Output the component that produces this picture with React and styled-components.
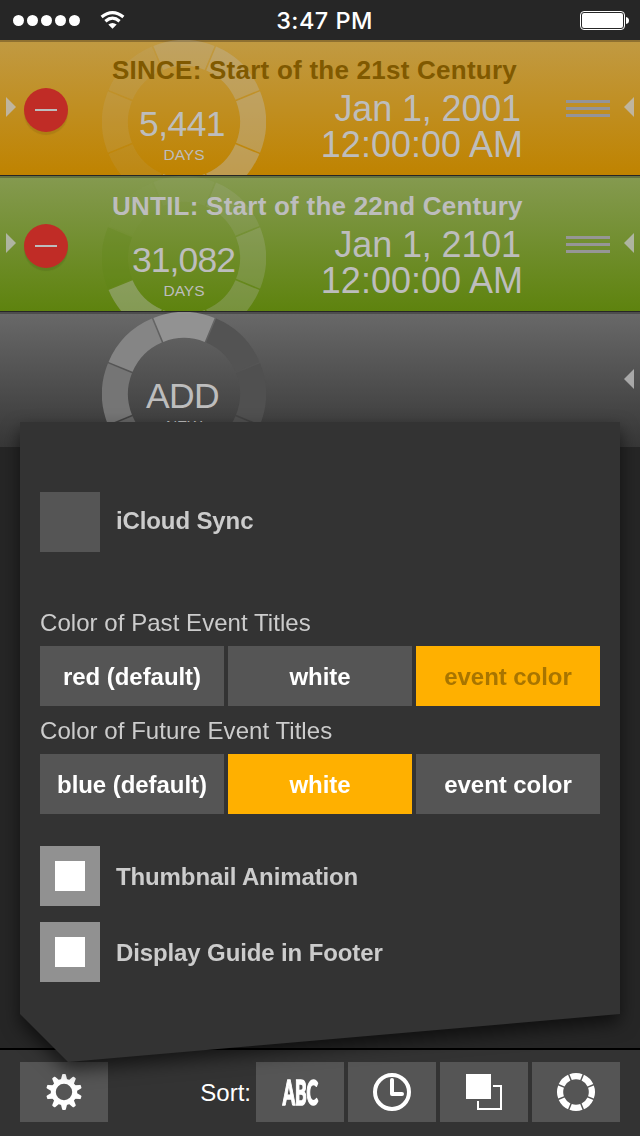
import React from "react";
import styled, { createGlobalStyle } from "styled-components";

const Global = createGlobalStyle`
  * { box-sizing: border-box; }
  body { margin: 0; background: #262626; font-family: "Liberation Sans", Arial, sans-serif; }
`;

const Screen = styled.div`
  position: relative;
  display: flex;
  flex-direction: column;
  width: 640px;
  height: 1136px;
  overflow: hidden;
  background: #262626;
`;

const StatusBar = styled.header`
  display: grid;
  grid-template-columns: 1fr auto 1fr;
  align-items: center;
  height: 40px;
  padding: 0 11px 0 13px;
  color: #fff;
`;
const Signal = styled.div`
  display: flex;
  align-items: center;
  gap: 3px;
`;
const Dot = styled.i`
  width: 11px;
  height: 11px;
  border-radius: 50%;
  background: #fff;
`;
const WifiIcon = styled.svg`
  width: 26px;
  height: 20px;
  margin-left: 17px;
`;
const Clock = styled.time`
  padding: 1px 0 0 7px;
  font: 500 23.5px/39px Inter, sans-serif;
  letter-spacing: 0.45px;
`;
const BatteryIcon = styled.svg`
  justify-self: end;
  width: 50px;
  height: 20px;
`;

const List = styled.main`
  flex: 1;
`;
const Row = styled.section`
  display: grid;
  grid-template-columns: 102px 164px 258px 116px;
  grid-template-rows: 49px 84px;
  height: ${(p) => (p.$last ? "135px" : "136px")};
  padding-top: 2px;
  overflow: hidden;
  border-bottom: ${(p) => (p.$last ? 0 : "1px")} solid #262626;
  background:
    linear-gradient(${(p) => p.$edge}, ${(p) => p.$edge}) top / 100% 2px no-repeat,
    linear-gradient(${(p) => p.$from}, ${(p) => p.$to});
  color: #bdbdbd;
`;
const Controls = styled.div`
  grid-row: 1 / 3;
  grid-column: ${(p) => (p.$right ? 4 : 1)};
  display: flex;
  justify-content: ${(p) => (p.$right ? "flex-end" : "flex-start")};
  padding: 0 6px;
`;
const Arrow = styled.i`
  width: 10px;
  height: 20px;
  margin-top: 55px;
  background: rgba(190, 190, 190, 0.8);
  clip-path: ${(p) => (p.$left ? "polygon(100% 0, 100% 100%, 0 50%)" : "polygon(0 0, 100% 50%, 0 100%)")};
`;
const Remove = styled.button`
  display: grid;
  place-items: center;
  width: 44px;
  height: 44px;
  margin: 46px 0 0 8px;
  padding: 0;
  border: 0;
  border-radius: 50%;
  background: #c02c26;
  box-shadow: 0 3px 1px rgba(0, 0, 0, 0.09);
  &::before {
    content: "";
    width: 22px;
    height: 2px;
    background: #bdbdbd;
  }
`;
const Grip = styled.div`
  width: 44px;
  height: 17px;
  margin: 58px 14px 0 0;
  border: solid ${(p) => p.$color};
  border-width: 3px 0;
  background: linear-gradient(transparent 4px, ${(p) => p.$color} 4px 7px, transparent 7px);
`;
const Dial = styled.div`
  position: relative;
  grid-column: 2;
  grid-row: 1 / 3;
  padding-top: 64px;
  text-align: center;
`;
const Ring = styled.svg`
  position: absolute;
  top: -2px;
  left: 0;
  width: 164px;
  height: 164px;
`;
const Count = styled.div`
  position: relative;
  padding-right: ${(p) => p.$shift};
  font-size: 35.5px;
  line-height: 36px;
  letter-spacing: ${(p) => p.$track};
`;
const Unit = styled.div`
  position: relative;
  padding-top: ${(p) => (p.$raised ? "3px" : "4px")};
  font-size: 15.5px;
  line-height: 18px;
`;
const Title = styled.h2`
  grid-column: 2 / 4;
  grid-row: 1;
  z-index: 1;
  margin: 0;
  padding: 13px 0 0 10px;
  color: ${(p) => p.$color};
  font-size: 26px;
  line-height: 30px;
  letter-spacing: 0.24px;
  white-space: nowrap;
`;
const When = styled.div`
  grid-column: 3;
  grid-row: 2;
  font-size: 36px;
  line-height: 36px;
  text-align: right;
  white-space: nowrap;
`;
const DateLine = styled.div`
  padding-right: 3px;
  letter-spacing: -0.15px;
`;
const TimeLine = styled.div`
  padding-right: 1px;
`;

const Footer = styled.footer`
  display: flex;
  height: 88px;
  padding: 12px 20px 14px;
  border-top: 2px solid #000;
  background: #333;
`;
const ToolButton = styled.button`
  display: grid;
  place-items: center;
  width: 88px;
  height: 60px;
  padding: 0;
  border: 0;
  background: #555;
  color: #fff;
`;
const SortGroup = styled.div`
  display: flex;
  gap: 4px;
  margin-left: auto;
`;
const SortLabel = styled.span`
  padding: 1px 1px 0 0;
  color: #fff;
  font-size: 24px;
  line-height: 60px;
`;
const Abc = styled.span`
  padding-bottom: 2px;
  font: 900 35px/58px Lato, sans-serif;
  -webkit-text-stroke: 1.6px #fff;
  transform: scaleX(0.5);
`;
const Icon = styled.svg`
  width: 40px;
  height: 40px;
`;

const PanelShadow = styled.div`
  position: absolute;
  left: 20px;
  top: 422px;
  filter: drop-shadow(0 8px 9px rgba(0, 0, 0, 0.6));
`;
const Panel = styled.div`
  width: 600px;
  height: 640px;
  padding: 70px 20px 0;
  background: #333;
  clip-path: polygon(0 0, 100% 0, 100% 592px, 48px 100%, 0 592px);
  color: #ccc;
`;
const Option = styled.label`
  display: flex;
  align-items: center;
  gap: 16px;
  height: 60px;
  margin-bottom: ${(p) => p.$after || "16px"};
  font-size: 24px;
  font-weight: 700;
  letter-spacing: -0.12px;
`;
const OptionText = styled.span`
  padding: ${(p) => (p.$raised ? "0 0 2px" : "2px 0 0")};
`;
const Box = styled.span`
  display: grid;
  place-items: center;
  width: 60px;
  height: 60px;
  background: ${(p) => (p.$on ? "#919191" : "#555")};
  &::before {
    content: "";
    width: 30px;
    height: 30px;
    background: ${(p) => (p.$on ? "#fff" : "transparent")};
  }
`;
const GroupLabel = styled.div`
  height: 48px;
  padding-top: 10px;
  font-size: 24px;
  line-height: 30px;
  letter-spacing: 0.05px;
`;
const Segments = styled.div`
  display: grid;
  grid-template-columns: repeat(3, 184px);
  gap: 4px;
`;
const Segment = styled.button`
  height: 60px;
  padding: 2px 0 0;
  border: 0;
  background: ${(p) => (p.$on ? "#ffb000" : "#555")};
  color: ${(p) => (p.$dim ? "#a87500" : "#fff")};
  font: 700 24px/58px "Liberation Sans", Arial, sans-serif;
  letter-spacing: -0.05px;
`;
const Settings = styled.div`
  margin-bottom: 32px;
`;

const polar = (c, r, deg) => {
  const a = ((deg - 90) * Math.PI) / 180;
  return `${(c + r * Math.cos(a)).toFixed(2)} ${(c + r * Math.sin(a)).toFixed(2)}`;
};
const arc = (c, outer, inner, mid, gap) => {
  const o = 22.5 - (gap / outer) * 28.65;
  const i = 22.5 - (gap / inner) * 28.65;
  return `M${polar(c, outer, mid - o)}A${outer} ${outer} 0 0 1 ${polar(c, outer, mid + o)}L${polar(c, inner, mid + i)}A${inner} ${inner} 0 0 0 ${polar(c, inner, mid - i)}Z`;
};

function SegmentRing({ fills }) {
  return (
    <Ring viewBox="0 0 164 164">
      {fills.map((fill, i) => (
        <path key={i} d={arc(82, 82, 56, i * 45, 1.6)} fill={fill} />
      ))}
    </Ring>
  );
}

const light = (a) => `rgba(190,190,190,${a})`;
const rows = [
  {
    from: "#c19a43", to: "#bf8300", edge: "#8f7030", titleColor: "#805900", grip: "#949499",
    title: "SINCE: Start of the 21st Century", count: "5,441", track: "-0.6px", shift: "4px", unit: "DAYS", date: "Jan 1, 2001",
    fills: [0.26, 0.32, 0.38, 0.42, 0.45, 0.1, 0.13, 0.12].map(light),
  },
  {
    from: "#859a50", to: "#5e830e", edge: "#637340", titleColor: "#bdbdbd", grip: "#969696",
    title: "UNTIL: Start of the 22nd Century", count: "31,082", track: "-0.9px", shift: "1px", unit: "DAYS", date: "Jan 1, 2101",
    fills: [light(0.06), light(0.15), light(0.22), light(0.27), light(0.33), light(0.4), "rgba(90,130,20,0.22)", light(0.02)],
  },
  {
    from: "#696969", to: "#373737", edge: "#4d4d4d", count: "ADD", track: "-0.7px", shift: "3px", unit: "NEW", last: true,
    fills: ["#929292", "#535353", "#505050", "#505050", "#555", "#656565", "#757575", "#858585"],
  },
];

function EventRow({ row }) {
  return (
    <Row $from={row.from} $to={row.to} $edge={row.edge} $last={row.last}>
      {!row.last && (
        <Controls>
          <Arrow />
          <Remove />
        </Controls>
      )}
      <Dial>
        <SegmentRing fills={row.fills} />
        <Count $track={row.track} $shift={row.shift}>{row.count}</Count>
        <Unit $raised={row.last}>{row.unit}</Unit>
      </Dial>
      {!row.last && (
        <>
          <Title $color={row.titleColor}>{row.title}</Title>
          <When>
            <DateLine>{row.date}</DateLine>
            <TimeLine>12:00:00 AM</TimeLine>
          </When>
        </>
      )}
      <Controls $right>
        {!row.last && <Grip $color={row.grip} />}
        <Arrow $left />
      </Controls>
    </Row>
  );
}

function SegmentedControl({ label, options, selected, dim }) {
  return (
    <div>
      <GroupLabel>{label}</GroupLabel>
      <Segments>
        {options.map((o, i) => (
          <Segment key={o} $on={i === selected} $dim={dim && i === selected}>{o}</Segment>
        ))}
      </Segments>
    </div>
  );
}

function GearIcon() {
  return (
    <Icon viewBox="-20 -20 40 40" fill="#fff">
      <circle r="10.7" fill="none" stroke="#fff" strokeWidth="5" />
      {Array.from({ length: 10 }, (_, i) => (
        <path key={i} d="M-3.2 -12L-1.9 -17.2Q-1.7 -18 -1 -18H1Q1.7 -18 1.9 -17.2L3.2 -12Z" transform={`rotate(${i * 36})`} />
      ))}
    </Icon>
  );
}

export default function App() {
  return (
    <Screen>
      <Global />
      <StatusBar>
        <Signal>
          {[0, 1, 2, 3, 4].map((i) => <Dot key={i} />)}
          <WifiIcon viewBox="0 0 26 20" fill="none" stroke="#fff" strokeWidth="3.2">
            <path d="M1.6 7Q7 2.6 12.5 2.6T23.4 7" />
            <path d="M5.4 11.2Q9 8.1 12.5 8.1T19.6 11.2" />
            <path d="M12.5 18.8L8.3 14.6Q12.5 11.2 16.7 14.6Z" fill="#fff" stroke="none" />
          </WifiIcon>
        </Signal>
        <Clock>3:47 PM</Clock>
        <BatteryIcon viewBox="0 0 50 20">
          <rect x="1.5" y="1.5" width="44" height="18" rx="3.5" fill="none" stroke="#fff" />
          <rect x="3" y="3" width="41" height="15" rx="2" fill="#fff" />
          <path d="M47 7Q50 7.5 50 10.5T47 14Z" fill="#fff" />
        </BatteryIcon>
      </StatusBar>
      <List>
        {rows.map((row) => <EventRow key={row.count} row={row} />)}
      </List>
      <Footer>
        <ToolButton aria-label="Settings"><GearIcon /></ToolButton>
        <SortGroup>
          <SortLabel>Sort:</SortLabel>
          <ToolButton><Abc>ABC</Abc></ToolButton>
          <ToolButton aria-label="By time">
            <Icon viewBox="0 0 40 40" fill="none" stroke="#fff" strokeWidth="4">
              <circle cx="20" cy="20" r="17" />
              <path d="M20 8V22H30" strokeLinecap="round" strokeLinejoin="round" />
            </Icon>
          </ToolButton>
          <ToolButton aria-label="By color">
            <Icon viewBox="0 0 40 40">
              <rect x="2" y="2" width="25" height="25" fill="#fff" />
              <path d="M29 14H37V37H14V29" fill="none" stroke="#fff" strokeWidth="2" />
            </Icon>
          </ToolButton>
          <ToolButton aria-label="By progress">
            <Icon viewBox="0 0 40 40" fill="#fff">
              {Array.from({ length: 8 }, (_, i) => <path key={i} d={arc(20, 19, 12.8, i * 45, 1.5)} />)}
            </Icon>
          </ToolButton>
        </SortGroup>
      </Footer>
      <PanelShadow>
        <Panel>
          <Option $after="46px"><Box /><OptionText $raised>iCloud Sync</OptionText></Option>
          <Settings>
            <SegmentedControl label="Color of Past Event Titles" options={["red (default)", "white", "event color"]} selected={2} dim />
            <SegmentedControl label="Color of Future Event Titles" options={["blue (default)", "white", "event color"]} selected={1} />
          </Settings>
          <Option><Box $on /><OptionText>Thumbnail Animation</OptionText></Option>
          <Option><Box $on /><OptionText>Display Guide in Footer</OptionText></Option>
        </Panel>
      </PanelShadow>
    </Screen>
  );
}
